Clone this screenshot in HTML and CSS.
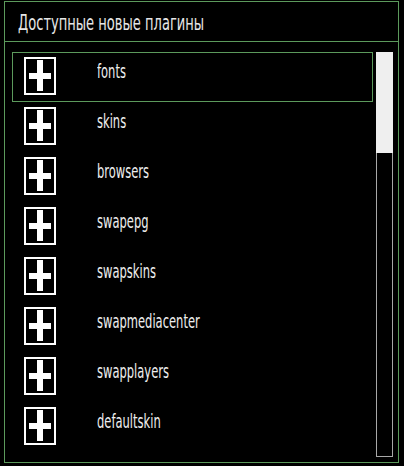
FILE: index.html
```html
<!DOCTYPE html>
<html lang="ru">
<head>
    <meta charset="UTF-8">
    <title>Доступные новые плагины</title>
    <link rel="stylesheet" href="styles.css">
</head>
<body>
    <div class="window">
        <div class="title"><span>Доступные новые плагины</span></div>

        <div class="content">
            <ul class="plugin-list">
                <li class="selected">
                    <svg class="icon" viewBox="0 0 32 38"><rect x="1" y="1" width="30" height="36" fill="none" stroke="#fff" stroke-width="2"/><path d="M13 3h6v31h-6zM5 16h22v6H5z" fill="#fff"/></svg>
                    <span>fonts</span>
                </li>
                <li>
                    <svg class="icon" viewBox="0 0 32 38"><rect x="1" y="1" width="30" height="36" fill="none" stroke="#fff" stroke-width="2"/><path d="M13 3h6v31h-6zM5 16h22v6H5z" fill="#fff"/></svg>
                    <span>skins</span>
                </li>
                <li>
                    <svg class="icon" viewBox="0 0 32 38"><rect x="1" y="1" width="30" height="36" fill="none" stroke="#fff" stroke-width="2"/><path d="M13 3h6v31h-6zM5 16h22v6H5z" fill="#fff"/></svg>
                    <span>browsers</span>
                </li>
                <li>
                    <svg class="icon" viewBox="0 0 32 38"><rect x="1" y="1" width="30" height="36" fill="none" stroke="#fff" stroke-width="2"/><path d="M13 3h6v31h-6zM5 16h22v6H5z" fill="#fff"/></svg>
                    <span>swapepg</span>
                </li>
                <li>
                    <svg class="icon" viewBox="0 0 32 38"><rect x="1" y="1" width="30" height="36" fill="none" stroke="#fff" stroke-width="2"/><path d="M13 3h6v31h-6zM5 16h22v6H5z" fill="#fff"/></svg>
                    <span>swapskins</span>
                </li>
                <li>
                    <svg class="icon" viewBox="0 0 32 38"><rect x="1" y="1" width="30" height="36" fill="none" stroke="#fff" stroke-width="2"/><path d="M13 3h6v31h-6zM5 16h22v6H5z" fill="#fff"/></svg>
                    <span>swapmediacenter</span>
                </li>
                <li>
                    <svg class="icon" viewBox="0 0 32 38"><rect x="1" y="1" width="30" height="36" fill="none" stroke="#fff" stroke-width="2"/><path d="M13 3h6v31h-6zM5 16h22v6H5z" fill="#fff"/></svg>
                    <span>swapplayers</span>
                </li>
                <li>
                    <svg class="icon" viewBox="0 0 32 38"><rect x="1" y="1" width="30" height="36" fill="none" stroke="#fff" stroke-width="2"/><path d="M13 3h6v31h-6zM5 16h22v6H5z" fill="#fff"/></svg>
                    <span>defaultskin</span>
                </li>
            </ul>

            <!-- Scrollbar -->
            <div class="scrollbar">
                <div class="thumb"></div>
            </div>
        </div>
    </div>
</body>
</html>
```

FILE: styles.css
```css
body {
    margin: 0;
    background-color: #000;
    color: #eee;
    font-family: "DejaVu Sans Condensed", "DejaVu Sans", sans-serif;
}
.window {
    box-sizing: border-box;
    width: 395px;
    height: 462px;
    margin: 1px 0 0 4px;
    border: 1px solid #5c9a5c;
}
.title {
    box-sizing: border-box;
    height: 40px;
    border-bottom: 1px solid #5c9a5c;
    padding: 10px 0 0 13px;
    font-size: 22px;
    line-height: 22px;
    color: #e6e6e6;
    white-space: nowrap;
}
/* the receiver font is much narrower than anything installed */
.title span,
.plugin-list span {
    display: inline-block;
    transform-origin: left top;
}
.title span {
    transform: scaleX(0.66);
}
.content {
    display: flex;
    padding: 10px 0 0 7px;
}
.plugin-list {
    list-style: none;
    margin: 0;
    padding: 0;
    width: 361px;
}
.plugin-list li {
    box-sizing: border-box;
    height: 50px;
    display: flex;
    align-items: flex-start;
    padding: 4px 0 0 11px;
    border: 1px solid transparent;
    font-size: 20px;
    line-height: 20px;
    white-space: nowrap;
}
.plugin-list li.selected {
    border-color: #5c9a5c;
}
.plugin-list span {
    margin-top: 4px;
    transform: scaleX(0.64);
}
.icon {
    width: 32px;
    height: 38px;
    margin-right: 41px;
    flex-shrink: 0;
}
.scrollbar {
    box-sizing: border-box;
    width: 17px;
    height: 405px;
    margin-left: 3px;
    border: 1px solid #a8a8a8;
}
.thumb {
    height: 101px;
    margin: -1px;
    background-color: #efefef;
}
```
